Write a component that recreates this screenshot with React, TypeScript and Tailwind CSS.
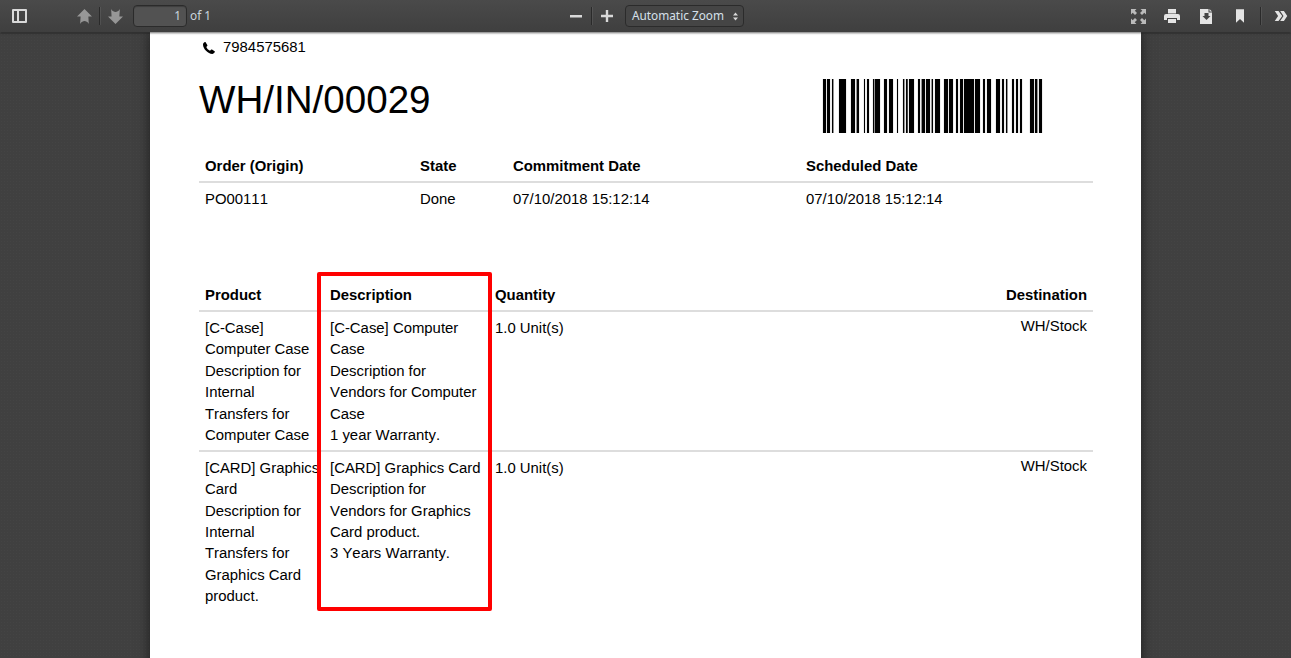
import React from "react";

const bars: [number, number][] = [[24,33],[36,45],[51,55],[72,93],[108,120],[125,132],[147,150],[156,162],[174,178],[180,195],[207,216],[222,234],[246,249],[264,268],[273,278],[282,297],[309,315],[320,330],[333,345],[350,354],[360,375],[387,399],[402,414],[423,429],[435,444],[447,477],[480,495],[504,510],[516,528],[543,555],[561,567],[573,577],[591,597],[603,609],[615,621],[645,657],[660,667],[672,681]];

function Sep() {
  return <div className="w-px h-[18px] bg-[#2a2a2a] shadow-[1px_0_0_rgba(255,255,255,0.08)]" />;
}

function Barcode() {
  return (
    <svg width="235" height="54" viewBox="0 0 705 54" preserveAspectRatio="none" className="block">
      {bars.map(([a, b]) => (
        <rect key={"h" + a} x={a - 1} y="0" width={b - a + 2} height="54" fill="#ccc" />
      ))}
      {bars.map(([a, b]) => (
        <rect key={a} x={a} y="0" width={b - a} height="54" fill="#000" />
      ))}
    </svg>
  );
}

const ic = "#d9d9d9";

const Line = ({ children }: { children: React.ReactNode }) => (
  <div className="whitespace-nowrap">{children}</div>
);

export default function App() {
  return (
    <div className="h-[658px] w-[1291px] overflow-hidden flex flex-col bg-[#404040] bg-[radial-gradient(rgba(255,255,255,0.025)_1px,transparent_1px)] bg-[length:3px_3px] font-['Liberation_Sans',Arial,sans-serif]">
      <div className="relative z-10 h-8 shrink-0 flex items-center bg-gradient-to-b from-[#4a4a4a] to-[#3f3f3f] shadow-[0_1px_0_rgba(255,255,255,0.06),0_1px_2px_rgba(0,0,0,0.6)] font-['Noto_Sans',sans-serif] text-[11.8px] text-[#d9d9d9]">
        <svg width="16" height="14" viewBox="0 0 16 14" className="ml-[12px] mt-[-1px]">
          <path fill={ic} fillRule="evenodd" d="M1 0h13a1 1 0 0 1 1 1v12a1 1 0 0 1-1 1H1a1 1 0 0 1-1-1V1a1 1 0 0 1 1-1zm1 2v10h3V2H2zm5 0v10h6V2H7z" />
        </svg>
        <svg width="15" height="15" viewBox="0 0 15 15" className="ml-[49px] opacity-50">
          <path fill="#e8e8e8" d="M7.5 0 15 7.5h-3.600c0 0 .2 4 .5 7.500-1.300-2.300-3-3-4.400-3s-3.100.7-4.400 3c.3-3.500.5-7.500.5-7.500H0z" />
        </svg>
        <div className="ml-[7px]"><Sep /></div>
        <svg width="15" height="15" viewBox="0 0 15 15" className="ml-[8px] opacity-50">
          <path fill="#e8e8e8" d="M7.5 15 15 7.500h-3.600c0 0 .2-4 .5-7.500-1.300 2.300-3 3-4.400 3S4.400 2.300 3.100 0c.3 3.500.5 7.500.5 7.500H0z" />
        </svg>
        <div className="ml-[10px] w-[54px] h-[22px] rounded-sm border border-[#2b2b2b] bg-[#525252] shadow-[inset_0_1px_1px_rgba(0,0,0,0.25)] flex items-center justify-end pr-[5px] text-[#c9d4de]">1</div>
        <span className="ml-[3px] w-[22px] text-[#c9d4de] whitespace-nowrap">of 1</span>
        <svg width="12" height="3" viewBox="0 0 12 3" className="ml-[358px]"><rect width="12" height="2.500" fill={ic} /></svg>
        <div className="ml-[9px]"><Sep /></div>
        <svg width="12" height="12" viewBox="0 0 12 12" className="ml-[9px]"><path fill={ic} d="M4.800 0h2.400v4.800H12v2.400H7.200V12H4.800V7.200H0V4.800h4.800z" /></svg>
        <div className="ml-[12px] w-[119px] h-[22px] rounded-sm border border-[#2b2b2b] bg-[#454545] flex items-center pl-[6px] text-[#d6e0ea] whitespace-nowrap">
          <span className="w-[101px]">Automatic Zoom</span>
          <svg width="5" height="9" viewBox="0 0 7 11"><path fill={ic} d="M3.500 0 7 4H0zM3.500 11 0 7h7z" /></svg>
        </div>
        <svg width="15" height="15" viewBox="0 0 15 15" className="ml-[387px] opacity-80" fill={ic}>
          <path d="M0 0h5.500L3.800 1.700 6 4 4 6 1.700 3.800 0 5.500zM15 0v5.500l-1.700-1.700L11 6 9 4l2.300-2.300L9.500 0zM0 15V9.500l1.700 1.700L4 9l2 2-2.300 2.300L5.500 15zM15 15H9.500l1.700-1.700L9 11l2-2 2.300 2.200L15 9.500z" />
        </svg>
        <svg width="16" height="14" viewBox="0 0 16 14" className="ml-[18px]" fill="#e4e4e4">
          <path fillRule="evenodd" d="M4 0h8v4.500H4zM2 5h12a2 2 0 0 1 2 2v4h-3V9H3v2H0V7a2 2 0 0 1 2-2zM4 10h8v4H4z" />
        </svg>
        <svg width="13" height="15" viewBox="0 0 13 15" className="ml-[20px]" fill="#e4e4e4">
          <path fillRule="evenodd" d="M0 0h8.500v3.500H12V15H0zM9.500 0 12 2.500H9.500zM4.500 4v3H2.500l4 4 4-4h-2V4z" />
        </svg>
        <svg width="8" height="14" viewBox="0 0 9 15" className="ml-[23px]" fill="#e4e4e4"><path d="M0 0h9v15L4.500 11 0 15z" /></svg>
        <div className="ml-[16px]"><Sep /></div>
        <svg width="14" height="10" viewBox="0 0 15 12" className="ml-[13px]" fill="#e4e4e4">
          <path d="M0 0h4.500L9 6l-4.500 6H0l4-6zM6.500 0H11l4 6-4 6H6.500l4-6z" />
        </svg>
      </div>
      <div className="flex-1 min-h-0 overflow-hidden">
        <div className="relative mx-auto w-[991px] h-[700px] bg-white text-black text-[14.9px] leading-[21.4px] [font-kerning:none] shadow-[0_0_12px_rgba(0,0,0,0.55)] pl-[49px] pr-[48px]">
          <div className="flex items-center pt-[6px] pl-[4px] h-[26px]">
            <svg width="12" height="12" viewBox="0 0 12 12" fill="#000">
              <path d="M2.600.3 4.300 3c.2.300.1.700-.1 1L3.300 5c.5 1.400 2.100 3.100 3.700 3.700l1-1c.3-.2.700-.3 1-.1l2.600 1.700c.3.200.4.500.2.800-.5 1-1.500 1.900-2.500 1.900C5 12 0 7 0 2.600 0 1.600.9.600 1.800.1c.3-.2.600-.1.800.2z" />
            </svg>
            <span className="ml-[8px]">7984575681</span>
          </div>
          <div className="flex justify-between items-start pt-[20px] h-[91px]">
            <h1 className="text-[38.6px] leading-[44px] font-normal whitespace-nowrap">WH/IN/00029</h1>
            <div className="mt-[1px] mr-[43px]"><Barcode /></div>
          </div>
          <table className="w-full table-fixed border-collapse">
            <colgroup>
              <col className="w-[215px]" /><col className="w-[93px]" /><col className="w-[293px]" /><col />
            </colgroup>
            <thead>
              <tr className="border-b-2 border-[#dddddd] font-bold text-left">
                <th className="px-[6px] pt-[7px] pb-[4px]">Order (Origin)</th>
                <th className="px-[6px] pt-[7px] pb-[4px]">State</th>
                <th className="px-[6px] pt-[7px] pb-[4px]">Commitment Date</th>
                <th className="px-[6px] pt-[7px] pb-[4px]">Scheduled Date</th>
              </tr>
            </thead>
            <tbody>
              <tr>
                <td className="px-[6px] pt-[6px]">PO00111</td>
                <td className="px-[6px] pt-[6px]">Done</td>
                <td className="px-[6px] pt-[6px]">07/10/2018 15:12:14</td>
                <td className="px-[6px] pt-[6px]">07/10/2018 15:12:14</td>
              </tr>
            </tbody>
          </table>
          <table className="w-full table-fixed border-collapse mt-[68px]">
            <colgroup>
              <col className="w-[125px]" /><col className="w-[165px]" /><col />
            </colgroup>
            <thead>
              <tr className="border-b-2 border-[#dddddd] font-bold text-left">
                <th className="px-[6px] pt-[6px] pb-[4px]">Product</th>
                <th className="px-[6px] pt-[6px] pb-[4px]">Description</th>
                <th className="px-[6px] pt-[6px] pb-[4px]">Quantity</th>
                <th className="px-[6px] pt-[6px] pb-[4px] text-right">Destination</th>
              </tr>
            </thead>
            <tbody className="align-top">
              <tr className="border-b-2 border-[#dddddd]">
                <td className="px-[6px] pt-[5.7px] pb-[4px]">
                  <Line>[C-Case]</Line><Line>Computer Case</Line><Line>Description for</Line><Line>Internal</Line><Line>Transfers for</Line><Line>Computer Case</Line>
                </td>
                <td className="px-[6px] pt-[5.7px] pb-[4px]">
                  <Line>[C-Case] Computer</Line><Line>Case</Line><Line>Description for</Line><Line>Vendors for Computer</Line><Line>Case</Line><Line>1 year Warranty.</Line>
                </td>
                <td className="px-[6px] pt-[6px] pb-[4px]">1.0 Unit(s)</td>
                <td className="px-[6px] pt-[4px] pb-[4px] text-right">WH/Stock</td>
              </tr>
              <tr>
                <td className="px-[6px] pt-[5.5px] pb-[5px]">
                  <Line>[CARD] Graphics</Line><Line>Card</Line><Line>Description for</Line><Line>Internal</Line><Line>Transfers for</Line><Line>Graphics Card</Line><Line>product.</Line>
                </td>
                <td className="px-[6px] pt-[5.5px] pb-[5px]">
                  <Line>[CARD] Graphics Card</Line><Line>Description for</Line><Line>Vendors for Graphics</Line><Line>Card product.</Line><Line>3 Years Warranty.</Line>
                </td>
                <td className="px-[6px] pt-[6px] pb-[5px]">1.0 Unit(s)</td>
                <td className="px-[6px] pt-[4px] pb-[5px] text-right">WH/Stock</td>
              </tr>
            </tbody>
          </table>
          <div className="absolute left-[167px] top-[240px] w-[175px] h-[339px] border-4 border-[#ff0000] rounded-[2px]" />
        </div>
      </div>
    </div>
  );
}
